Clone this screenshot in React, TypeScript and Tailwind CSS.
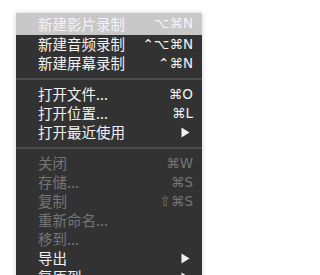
type Item =
  | { kind: "sep" }
  | {
      kind: "item";
      label: string;
      shortcut?: string;
      submenu?: boolean;
      disabled?: boolean;
      active?: boolean;
    };

const items: Item[] = [
  { kind: "item", label: "新建影片录制", shortcut: "⌥⌘N", active: true },
  { kind: "item", label: "新建音频录制", shortcut: "⌃⌥⌘N" },
  { kind: "item", label: "新建屏幕录制", shortcut: "⌃⌘N" },
  { kind: "sep" },
  { kind: "item", label: "打开文件...", shortcut: "⌘O" },
  { kind: "item", label: "打开位置...", shortcut: "⌘L" },
  { kind: "item", label: "打开最近使用", submenu: true },
  { kind: "sep" },
  { kind: "item", label: "关闭", shortcut: "⌘W", disabled: true },
  { kind: "item", label: "存储...", shortcut: "⌘S", disabled: true },
  { kind: "item", label: "复制", shortcut: "⇧⌘S", disabled: true },
  { kind: "item", label: "重新命名...", disabled: true },
  { kind: "item", label: "移到...", disabled: true },
  { kind: "item", label: "导出", submenu: true },
  { kind: "item", label: "复原到", submenu: true },
];

function Arrow() {
  return (
    <svg width="9" height="11" viewBox="0 0 9 11" className="mr-[3px]">
      <path d="M0.5 0.5 L8.5 5.5 L0.5 10.5 Z" fill="#f2f2f2" />
    </svg>
  );
}

export default function App() {
  return (
    <div className="h-[275px] w-[219px] overflow-hidden bg-white pl-[16px] pt-[13px]">
      <div className="w-[186px] bg-[#323232] shadow-[0_0_5px_rgba(0,0,0,0.18)] pb-4">
        {items.map((item, i) =>
          item.kind === "sep" ? (
            <div key={i} className="flex h-[12px] items-center">
              <div className="h-[2px] w-full bg-[#4d4d4d]" />
            </div>
          ) : (
            <div
              key={i}
              className={`flex items-center justify-between pl-[22px] pr-[9px] ${
                item.active ? "h-[22px] bg-[#c8c8c8] text-[#f4f2f8]" : "h-[19px]"
              } ${item.disabled ? "text-[#767676]" : item.active ? "" : "text-[#f2f2f2]"}`}
            >
              <span className="text-[14.5px] leading-none [font-family:'Noto_Sans_CJK_SC',sans-serif]">
                {item.label}
              </span>
              {item.shortcut && (
                <span className="text-[13.5px] leading-none [font-family:'DejaVu_Sans','Noto_Sans_CJK_SC',sans-serif]">
                  {item.shortcut}
                </span>
              )}
              {item.submenu && <Arrow />}
            </div>
          )
        )}
      </div>
    </div>
  );
}
